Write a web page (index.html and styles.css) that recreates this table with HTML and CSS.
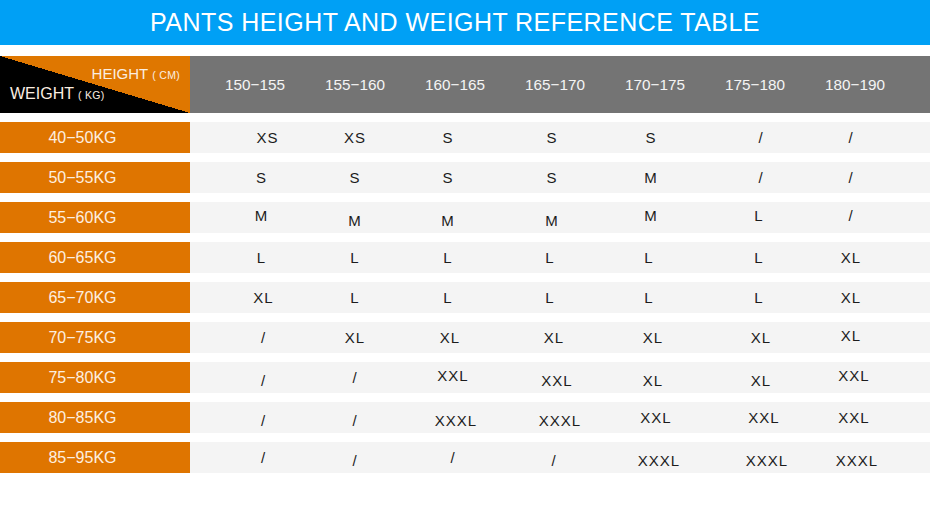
FILE: index.html
```html
<!DOCTYPE html>
<html>
<head>
<meta charset="utf-8">
<link rel="stylesheet" href="styles.css">
</head>
<body>
<div class="banner"><h1 class="title">PANTS HEIGHT AND WEIGHT REFERENCE TABLE</h1></div>
<div class="table">
  <div class="row head">
    <div class="corner">
      <div class="c-height">HEIGHT<small>( CM)</small></div>
      <div class="c-weight">WEIGHT<small>( KG)</small></div>
    </div>
    <div class="cells hcells">
      <span>150−155</span><span>155−160</span><span>160−165</span><span>165−170</span><span>170−175</span><span>175−180</span><span>180−190</span>
    </div>
  </div>
  <div class="row">
    <div class="label">40−50KG</div>
    <div class="cells data"><span class="w2">XS</span><span>XS</span><span class="w1">S</span><span class="w1">S</span><span class="w1">S</span><span>/</span><span>/</span></div>
  </div>
  <div class="row">
    <div class="label">50−55KG</div>
    <div class="cells data"><span class="w1">S</span><span>S</span><span class="w1">S</span><span class="w1">S</span><span class="w1">M</span><span>/</span><span>/</span></div>
  </div>
  <div class="row">
    <div class="label">55−60KG</div>
    <div class="cells data"><span class="up w1">M</span><span class="lo">M</span><span class="lo w1">M</span><span class="lo w1">M</span><span class="up w1">M</span><span class="up w1">L</span><span class="up">/</span></div>
  </div>
  <div class="row">
    <div class="label">60−65KG</div>
    <div class="cells data"><span class="w1">L</span><span>L</span><span class="w1">L</span><span class="w1 w1b">L</span><span class="w1 w1b">L</span><span class="w1">L</span><span>XL</span></div>
  </div>
  <div class="row">
    <div class="label">65−70KG</div>
    <div class="cells data"><span>XL</span><span>L</span><span class="w1">L</span><span class="w1 w1b">L</span><span class="w1 w1b">L</span><span class="w1">L</span><span>XL</span></div>
  </div>
  <div class="row">
    <div class="label">70−75KG</div>
    <div class="cells data"><span>/</span><span>XL</span><span>XL</span><span>XL</span><span>XL</span><span>XL</span><span class="up">XL</span></div>
  </div>
  <div class="row">
    <div class="label">75−80KG</div>
    <div class="cells data"><span class="lo">/</span><span>/</span><span class="up w3">XXL</span><span class="lo w3">XXL</span><span class="lo">XL</span><span class="lo">XL</span><span class="up w3">XXL</span></div>
  </div>
  <div class="row">
    <div class="label">80−85KG</div>
    <div class="cells data"><span class="lo">/</span><span class="lo">/</span><span class="lo w4">XXXL</span><span class="lo w4">XXXL</span><span class="w3">XXL</span><span class="w3">XXL</span><span class="w3">XXL</span></div>
  </div>
  <div class="row">
    <div class="label">85−95KG</div>
    <div class="cells data"><span>/</span><span class="lo">/</span><span class="sl3">/</span><span class="lo">/</span><span class="lo w4">XXXL</span><span class="lo w4">XXXL</span><span class="lo w4">XXXL</span></div>
  </div>
</div>
</body>
</html>
```
FILE: styles.css
```css
html, body {
  margin: 0;
  padding: 0;
  background: #ffffff;
  font-family: "Liberation Sans", Arial, sans-serif;
}

.banner {
  height: 45px;
  background: #00a0f5;
  display: flex;
  align-items: center;
  justify-content: center;
  padding-right: 20px;
}

.title {
  margin: 0;
  font-size: 25px;
  font-weight: normal;
  letter-spacing: 0.45px;
  color: #ffffff;
  line-height: 1;
}

.table {
  margin-top: 11px;
  display: flex;
  flex-direction: column;
  gap: 9px;
}

.row {
  display: flex;
  height: 31px;
}

.row.head {
  height: 57px;
}

.corner {
  width: 190px;
  flex: none;
  box-sizing: border-box;
  padding: 8px 10px 0 10px;
  background: linear-gradient(to top right, #000000 50%, #df7700 50%);
  color: #fbeee0;
  font-size: 15px;
  line-height: 20px;
}

.corner small {
  font-size: 10.5px;
  margin-left: 4px;
  letter-spacing: 0.3px;
}

.c-height {
  text-align: right;
}

.c-weight {
  text-align: left;
  font-size: 16px;
  line-height: 18px;
}

.label {
  width: 190px;
  flex: none;
  box-sizing: border-box;
  padding-right: 25px;
  background: #df7500;
  color: #fdefe0;
  font-size: 16px;
  display: flex;
  align-items: center;
  justify-content: center;
}

.cells {
  flex: 1;
  display: grid;
  grid-template-columns: repeat(7, 100px);
  padding-left: 15px;
  align-items: center;
  justify-items: center;
}

.hcells {
  background: #747474;
  color: #f4f4f4;
  font-size: 15.3px;
}

.data {
  background: #f4f4f4;
  color: #1c1c1c;
  font-size: 15px;
  letter-spacing: 1px;
}

.data span:nth-child(1) { padding-left: 17px; }
.data span:nth-child(3) { padding-right: 10px; }
.data span:nth-child(4) { padding-right: 2px; }
.data span:nth-child(5) { padding-right: 4px; }
.data span:nth-child(6) { padding-left: 12px; }
.data span:nth-child(7) { padding-right: 8px; }

.data span.w1 { margin-right: 4px; }
.data span.w1b { margin-right: 8px; }
.data span.w2 { margin-left: 8px; }
.data span.w3 { margin-left: 6px; }
.data span.w4 { margin-left: 12px; }
.data span.sl3 { margin-left: 6px; }

.data span.lo { padding-top: 6px; }
.data span.up { padding-bottom: 4px; }
```
